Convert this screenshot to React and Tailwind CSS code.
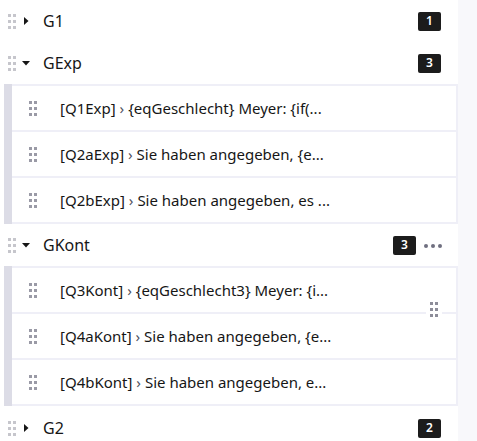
import React from 'react';

const Dots = ({ className = '' }) => (
  <div className={`grid grid-cols-2 gap-x-[2px] gap-y-[3px] ${className}`}>
    {[0, 1, 2, 3, 4, 5].map((i) => (
      <span key={i} className="block w-[3px] h-[3px] bg-current" />
    ))}
  </div>
);

const Caret = ({ open }) =>
  open ? (
    <svg width="8" height="5" viewBox="0 0 8 5" className="text-[#161616]">
      <path d="M0 0h8L4 4.5z" fill="currentColor" />
    </svg>
  ) : (
    <svg width="5" height="8" viewBox="0 0 5 8" className="text-[#161616]">
      <path d="M0 0v8l4.5-4z" fill="currentColor" />
    </svg>
  );

const Badge = ({ n }) => (
  <span className="w-[23px] h-[19px] rounded-[2px] bg-[#1c1c1c] text-white text-[12px] font-semibold flex items-center justify-center">
    {n}
  </span>
);

const GroupRow = ({ name, count, open, className = '' }) => (
  <div className={`h-[42px] flex items-center pl-[8px] pr-[17px] ${className}`}>
    <Dots className="text-[#c6c6cc]" />
    <span className="w-[16px] flex justify-center ml-[2px]">
      <Caret open={open} />
    </span>
    <span className="ml-[9px] text-[16px] text-[#161616]">{name}</span>
    <div className="ml-auto flex items-center">
      <Badge n={count} />
    </div>
  </div>
);

const Question = ({ id, text }) => (
  <div className="h-[44px] bg-white flex items-center pl-[17px]">
    <Dots className="text-[#9a9aa6]" />
    <span className="ml-[23px] text-[15px] text-[#161616] whitespace-nowrap">
      [{id}] <span className="text-[#525260]">›</span> {text}
    </span>
  </div>
);

const Children = ({ items }) => (
  <div className="ml-[4px] border-l-8 border-[#dcdce6] bg-[#efeff7] py-[2px] pr-[2px] flex flex-col gap-[2px]">
    {items}
  </div>
);

export default function App() {
  return (
    <div
      className="w-[477px] h-[441px] overflow-hidden flex bg-[#f8f8fb]"
      style={{ fontFamily: '"Noto Sans", "Open Sans", sans-serif' }}
    >
      <div className="w-[458px] bg-white">
        <GroupRow name="G1" count="1" />
        <GroupRow name="GExp" count="3" open />
        <Children
          items={[
            <Question key="a" id="Q1Exp" text="{eqGeschlecht} Meyer: {if(..." />,
            <Question key="b" id="Q2aExp" text="Sie haben angegeben, {e..." />,
            <Question key="c" id="Q2bExp" text="Sie haben angegeben, es ..." />,
          ]}
        />
        <div className="relative">
          <GroupRow name="GKont" count="3" open className="pr-[42px]" />
          <div className="absolute right-[16px] top-[20px] flex gap-[3px]">
            {[0, 1, 2].map((i) => (
              <span key={i} className="block w-[4px] h-[4px] rounded-full bg-[#6f6f80]" />
            ))}
          </div>
        </div>
        <div className="relative">
          <Children
            items={[
              <Question key="a" id="Q3Kont" text="{eqGeschlecht3} Meyer: {i..." />,
              <Question key="b" id="Q4aKont" text="Sie haben angegeben, {e..." />,
              <Question key="c" id="Q4bKont" text="Sie haben angegeben, e..." />,
            ]}
          />
          <div className="absolute left-[426px] top-[35px] bg-white px-[4px] py-[1px]">
            <Dots className="text-[#8d8d99]" />
          </div>
        </div>
        <GroupRow name="G2" count="2" className="mt-[1px]" />
      </div>
    </div>
  );
}
